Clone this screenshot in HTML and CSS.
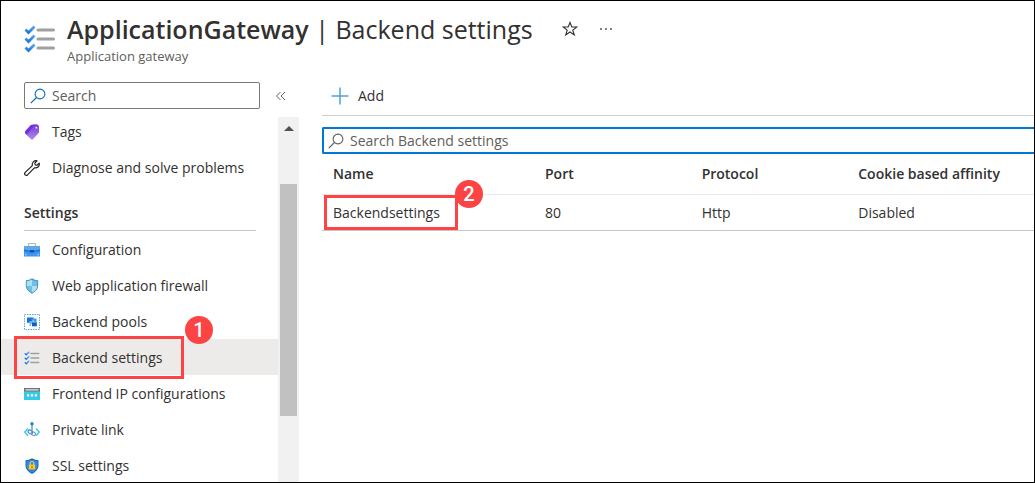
FILE: index.html
```html
<!DOCTYPE html>
<html lang="en">
<head>
<meta charset="utf-8">
<title>ApplicationGateway | Backend settings</title>
<link rel="stylesheet" href="styles.css">
</head>
<body>
<svg class="defs" aria-hidden="true">
  <defs>
    <linearGradient id="g-blue" x1="0" y1="0" x2="0" y2="1"><stop offset="0" stop-color="#5ea9f2"/><stop offset="1" stop-color="#1b78dc"/></linearGradient>
    <linearGradient id="g-purple" x1="0" y1="0" x2="0" y2="1"><stop offset="0" stop-color="#7338dc"/><stop offset="1" stop-color="#b48be6"/></linearGradient>
    <symbol id="i-checks" viewBox="0 0 32 28">
      <g fill="none" stroke="url(#g-blue)" stroke-width="2.800"><path d="M1.500 4.500 4.500 7.500 10.500 1.500"/><path d="M1.500 13.500 4.500 16.500 10.500 10.500"/><path d="M1.500 22.500 4.500 25.500 10.500 19.500"/></g>
      <path d="M14 5h15.500M14 14h15.500M14 23h15.500" stroke="#a0a0a0" stroke-width="3" stroke-linecap="round"/>
    </symbol>
    <symbol id="i-search" viewBox="0 0 16 16">
      <circle cx="10" cy="6" r="4.900" fill="none" stroke="currentColor" stroke-width="1.100"/><path d="M6.500 9.500.8 15.200" stroke="currentColor" stroke-width="1.200"/>
    </symbol>
  </defs>
</svg>
<div class="page">
  <header class="header">
    <svg class="header-icon"><use href="#i-checks"/></svg>
    <div class="header-text">
      <h1 class="title"><strong>ApplicationGateway</strong> <span>| Backend settings</span></h1>
      <p class="subtitle">Application gateway</p>
    </div>
    <div class="header-actions">
      <button class="icon-button" type="button" aria-label="Favorite"><svg width="16" height="16" viewBox="0 0 16 16"><path d="M8 1.500 9.800 6H14.800L10.800 9.100 12.300 14 8 11 3.700 14 5.200 9.100 1.200 6H6.200Z" fill="none" stroke="#323130" stroke-width="1.100"/></svg></button>
      <button class="icon-button" type="button" aria-label="More"><svg width="16" height="16" viewBox="0 0 16 16" fill="#484644"><circle cx="3" cy="8" r=".9"/><circle cx="8" cy="8" r=".9"/><circle cx="13" cy="8" r=".9"/></svg></button>
    </div>
  </header>
  <div class="body">
    <aside class="sidebar">
      <div class="side-search">
        <label class="search-box">
          <svg class="search-icon"><use href="#i-search"/></svg>
          <input class="search-input" type="text" placeholder="Search" aria-label="Search">
        </label>
        <button class="icon-button" type="button" aria-label="Collapse menu"><svg width="16" height="16" viewBox="0 0 16 16"><path d="M7.500 4 3.500 8 7.500 12M12 4 8 8 12 12" fill="none" stroke="#605e5c"/></svg></button>
      </div>
      <div class="side-scroll">
        <nav class="nav">
          <a class="nav-item" href="#"><svg class="nav-icon" viewBox="0 0 16 16"><path d="M1 7.500 7 1 12.500.3Q14.800.5 15 2.500V8.500L9.200 15Q8 16.300 6.800 15L1.600 10Q.6 9 1 7.500Z" fill="url(#g-purple)"/><path d="M1 7.500 7 1 11 .6 3 10.500 1.500 9.500Z" fill="#7130de"/><circle cx="12.300" cy="3.700" r="1.300" fill="#eee2fb" stroke="#673ab7" stroke-width=".5"/></svg>Tags</a>
          <a class="nav-item" href="#"><svg class="nav-icon" viewBox="0 0 16 16"><path d="M8.300 5.600C7.800 2.500 10 .2 13 .8L10.800 3.100 11.200 4.900 13 5.200 15.200 3.100C16 6 13.600 8.400 10.400 7.900L3.500 14.900C1.800 16.200-.2 14.300 1 12.600Z" fill="none" stroke="#222" stroke-width="1.200" stroke-linejoin="round"/></svg>Diagnose and solve problems</a>
          <h2 class="nav-heading">Settings</h2>
          <a class="nav-item" href="#"><svg class="nav-icon" viewBox="0 0 16 16"><path d="M4.500 4V2.300Q4.500 1.500 5.300 1.500H10.700Q11.500 1.500 11.500 2.300V4" fill="none" stroke="#b3b3b3" stroke-width="1.200"/><path d="M0 4H16V14.500H0Z" fill="#3e95ee"/><path d="M0 4H16V7.500Q8 10 0 7.500Z" fill="#5aa9f0"/><path d="M0 7.500Q8 10 16 7.500V9Q8 11 0 9Z" fill="#1f70cb"/><path d="M6 8H10V10.500H6Z" fill="#0c509d"/><path d="M1 11 3.500 13.500H1ZM15 11 12.500 13.500H15Z" fill="#85c4ff"/></svg>Configuration</a>
          <a class="nav-item" href="#"><svg class="nav-icon" viewBox="0 0 16 16"><path d="M8 .3Q11 2.400 14.200 2.300V8Q14 12.600 8 15.800 2 12.600 1.800 8V2.300Q5 2.400 8 .3Z" fill="#3d98c4"/><path d="M8 1.600Q10.500 3.200 13.200 3.300V8Q13 12 8 14.600 3 12 2.800 8V3.300Q5.500 3.200 8 1.600Z" fill="#70bfe0"/><path d="M8 1.600V8H2.800V3.300Q5.500 3.200 8 1.600ZM8 8H13.200Q13 12 8 14.600Z" fill="#aedff0"/></svg>Web application firewall</a>
          <a class="nav-item" href="#"><svg class="nav-icon" viewBox="0 0 16 16"><path d="M.5.5H15.500V15.500H.5Z" fill="none" stroke="#5ba6e6" stroke-dasharray="1.500 1"/><path d="M3 3.500H9.500V8.800H3Z" fill="#1670cc"/><path d="M8.500 4.500H12.500V11H8.500Z" fill="#3c98ef"/><path d="M5.500 7H10V10H7V12H5.500Z" fill="#70b9fb"/><path d="M8 8.500H12.800V12.300H8Z" fill="#0b62be"/><path d="M8 5.500 11 8.500" stroke="#bfe0ff"/></svg>Backend pools</a>
          <a class="nav-item nav-item-active" href="#" aria-current="page"><svg class="nav-icon"><use href="#i-checks"/></svg>Backend settings
            <span class="callout callout-nav"><span class="badge">1</span></span></a>
          <a class="nav-item" href="#"><svg class="nav-icon" viewBox="0 0 16 16"><path d="M0 2H16V6H0Z" fill="#737373"/><path d="M1.500 3.300H14.500V4.500H1.500Z" fill="#e8e8e8"/><path d="M0 5.500H16V14H0Z" fill="#37c9ea"/><path d="M3 8.200H5.200V10.400H3ZM6.900 8.200H9.100V10.400H6.900ZM10.800 8.200H13V10.400H10.800Z" fill="#fff"/></svg>Frontend IP configurations</a>
          <a class="nav-item" href="#"><svg class="nav-icon" viewBox="0 0 16 16" fill="none"><path d="M4 6.500.8 10 4 13.800M12 6.500 15.200 10 12 13.800" stroke="#44c5ee" stroke-width="1.500"/><path d="M8 2V9" stroke="#4b91cb" stroke-width="1.300"/><circle cx="8" cy="1.700" r="1.700" fill="#1689cf"/><ellipse cx="6.300" cy="10" rx="2.400" ry="1.700" transform="rotate(35 6.300 10)" stroke="#2f88d3" stroke-width="1.100"/><ellipse cx="9.300" cy="11.600" rx="2.400" ry="1.700" transform="rotate(35 9.300 11.600)" stroke="#7699bd" stroke-width="1.100"/></svg>Private link</a>
          <a class="nav-item" href="#"><svg class="nav-icon" viewBox="0 0 16 16"><path d="M8 .2Q11 2.200 14.500 2.200V8Q14.200 12.700 8 15.900 1.800 12.700 1.500 8V2.200Q5 2.200 8 .2Z" fill="#1268bd"/><path d="M8 1.300Q10.800 3.100 13.600 3.200V8Q13.300 12 8 14.800 2.700 12 2.400 8V3.200Q5.200 3.100 8 1.300Z" fill="#3289df"/><path d="M6.200 7V5.300A1.800 1.800 0 0 1 9.800 5.300V7" fill="none" stroke="#f5c84c" stroke-width="1.200"/><path d="M4.800 6.600H11.200V11.400H4.800Z" fill="#ffc629"/><path d="M8 8.300V10" stroke="#a66d00" stroke-width="1.200"/></svg>SSL settings</a>
        </nav>
        <div class="scrollbar" aria-hidden="true"><span class="scroll-arrow"></span><span class="scroll-thumb"></span></div>
      </div>
    </aside>
    <main class="main">
      <div class="toolbar">
        <button class="add-button" type="button"><svg width="18" height="18" viewBox="0 0 18 18"><path d="M9 .5V17.500M.5 9H17.500" stroke="#4aa3e3" stroke-width="1.500"/></svg>Add</button>
      </div>
      <label class="search-box search-box-focus">
        <svg class="search-icon"><use href="#i-search"/></svg>
        <input class="search-input" type="text" placeholder="Search Backend settings" aria-label="Search Backend settings">
      </label>
      <table class="table">
        <thead><tr><th class="col-name">Name</th><th class="col-mid">Port</th><th class="col-mid">Protocol</th><th>Cookie based affinity</th></tr></thead>
        <tbody><tr><td><a class="row-link" href="#">Backendsettings<span class="callout callout-row"><span class="badge">2</span></span></a></td><td>80</td><td>Http</td><td>Disabled</td></tr></tbody>
      </table>
    </main>
  </div>
</div>
</body>
</html>
```
FILE: styles.css
```css
* { box-sizing: border-box; }

body {
  margin: 0;
  background: #fff;
  color: #323130;
  font: 14px/20px "Open Sans", "Noto Sans", sans-serif;
}

button, input { font: inherit; color: inherit; }
button { background: none; border: 0; padding: 0; cursor: pointer; }
a { color: inherit; text-decoration: none; }
svg { display: block; flex: none; }
.defs { position: absolute; width: 0; height: 0; }

.page {
  display: flex;
  flex-direction: column;
  height: 100vh;
  border: 1px solid #000;
  overflow: hidden;
}

/* Header */
.header { display: flex; align-items: flex-start; padding: 10px 24px 0 23px; height: 81px; flex: none; }
.header-icon { width: 32px; height: 28px; margin-top: 14px; }
.header-text { margin-left: 11px; }
.title { margin: 0; font-size: 25px; line-height: 36px; font-weight: 400; white-space: nowrap; }
.title strong { font-weight: 600; }
.subtitle { margin: 0; font-size: 13px; line-height: 18px; color: #605e5c; }
.header-actions { display: flex; gap: 20px; margin: 10px 0 0 29px; }
.icon-button { flex: none; }

.body { display: flex; flex: 1; min-height: 0; }

/* Sidebar */
.sidebar { display: flex; flex-direction: column; width: 298px; flex: none; }
.side-search { display: flex; align-items: center; gap: 13px; padding: 0 10px 0 23px; }
.search-box {
  display: flex;
  align-items: center;
  gap: 6px;
  flex: 1;
  height: 27px;
  padding: 0 5px;
  border: 1px solid #7a7876;
  border-radius: 2px;
  color: #0f6cbd;
}
.search-icon { width: 16px; height: 16px; }
.search-input { flex: 1; min-width: 0; padding: 0; border: 0; outline: 0; background: none; color: #323130; }
.search-input::placeholder { color: #605e5c; opacity: 1; }

.side-scroll { display: flex; flex: 1; min-height: 0; margin-top: 4px; }
.nav { flex: 1; }
.nav-item {
  position: relative;
  display: flex;
  align-items: center;
  gap: 12px;
  height: 36px;
  padding: 2px 0 0 23px;
  white-space: nowrap;
}
.nav-icon { width: 16px; height: 16px; }
.nav-item-active { background: #edebe9; }
.nav-heading {
  margin: 0 22px 0 23px;
  padding: 18px 0 7px;
  border-bottom: 1px solid #c8c6c4;
  font-size: 14px;
  line-height: 20px;
  font-weight: 600;
}

.scrollbar { display: flex; flex-direction: column; width: 21px; margin-top: 4px; padding: 9px 2px 0; background: #f1f1f1; }
.scroll-arrow { align-self: center; border: 5px solid transparent; border-top: 0; border-bottom-color: #505050; }
.scroll-thumb { height: 232px; margin-top: 53px; background: #c1c1c1; }

/* Main */
.main { flex: 1; min-width: 0; margin-left: 23px; }
.toolbar { height: 34px; border-bottom: 1px solid #d2d0ce; margin-bottom: 11px; }
.add-button { display: flex; align-items: center; gap: 9px; height: 27px; margin-left: 9px; }
.search-box-focus { border: 2px solid #0078d4; border-right: 0; border-radius: 2px 0 0 2px; padding: 0 4px; color: #605e5c; }

.table { width: 100%; border-collapse: separate; border-spacing: 0; table-layout: fixed; }
.table th, .table td { padding: 0 11px; text-align: left; white-space: nowrap; }
.table th { height: 41px; font-weight: 600; border-bottom: 1px solid #edebe9; }
.table td { height: 36px; border-bottom: 1px solid #c8c6c4; }
.col-name { width: 212px; }
.col-mid { width: 22%; }
.row-link { position: relative; }

/* Numbered callouts */
.callout { position: absolute; border: 3px solid #fc4445; }
.callout-nav { left: 13px; top: -3px; width: 170px; height: 43px; z-index: 1; }
.callout-row { left: -9px; top: -8px; width: 134px; height: 35px; }
.badge {
  position: absolute;
  right: -32px;
  top: -23px;
  width: 28px;
  height: 28px;
  border-radius: 50%;
  background: #fc4445;
  color: #fff;
  font: 500 20px/28px Roboto, sans-serif;
  text-align: center;
}
.callout-row .badge { right: -28px; top: -18px; }
```
